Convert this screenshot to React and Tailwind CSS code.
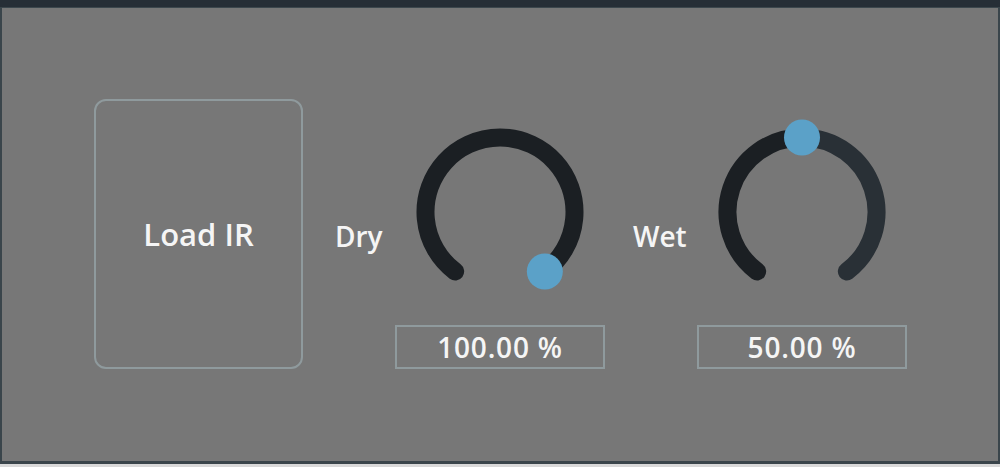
const CX = 105
const CY = 102
const R = 74.5

function pt(deg) {
  const a = (deg * Math.PI) / 180
  return [CX + R * Math.sin(a), CY - R * Math.cos(a)]
}

function arc(from, to) {
  const [x1, y1] = pt(from)
  const [x2, y2] = pt(to)
  const large = to - from > 180 ? 1 : 0
  return `M ${x1} ${y1} A ${R} ${R} 0 ${large} 1 ${x2} ${y2}`
}

const START = -143
const END = 143

function Knob({ value, label, text, labelW }) {
  const ang = START + (END - START) * value
  const [tx, ty] = pt(ang)
  return (
    <div className="flex items-start">
      <div className="self-center mt-[-8px] text-[28px] font-semibold text-[#f5f5f5] leading-none" style={{ width: labelW }}>{label}</div>
      <div className="flex flex-col items-center w-[210px]">
        <svg width="210" height="200" viewBox="0 0 210 200">
          {value < 1 && <path d={arc(ang, END)} fill="none" stroke="#293036" strokeWidth="18" strokeLinecap="round" />}
          <path d={arc(START, ang)} fill="none" stroke="#1b1f23" strokeWidth="18" strokeLinecap="round" />
          <circle cx={tx} cy={ty} r="18" fill="#5ba1c8" />
        </svg>
        <div className="mt-[15px] w-[210px] h-[44px] border-2 border-[#8f9a9d] flex items-center justify-center text-[28px] font-semibold text-[#f5f5f5] tracking-[0.8px] leading-none">
          {text}
        </div>
      </div>
    </div>
  )
}

export default function App() {
  return (
    <div className="w-[1000px] h-[467px] flex flex-col bg-[#d9d9d9]" style={{ fontFamily: '"Open Sans", "DejaVu Sans", sans-serif' }}>
      <div className="h-[7px] bg-[#262e36]" />
      <div className="flex-1 bg-[#777777] border-l-2 border-r-2 border-t border-b-[3px] border-t-[#3c474d] border-l-[#3a454b] border-r-[#3a454b] border-b-[#3a454b] flex items-start pl-[92px] pt-[91px]">
        <div className="w-[209px] h-[270px] border-2 border-[#8f9a9d] rounded-[12px] flex items-center justify-center text-[31px] font-semibold text-[#f5f5f5]">
          Load IR
        </div>
        <div className="flex gap-[28px] ml-[32px] mt-[11px]">
          <Knob value={1} label="Dry" text="100.00 %" labelW={60} />
          <Knob value={0.5} label="Wet" text="50.00 %" labelW={64} />
        </div>
      </div>
      <div className="h-[3px]" />
    </div>
  )
}
